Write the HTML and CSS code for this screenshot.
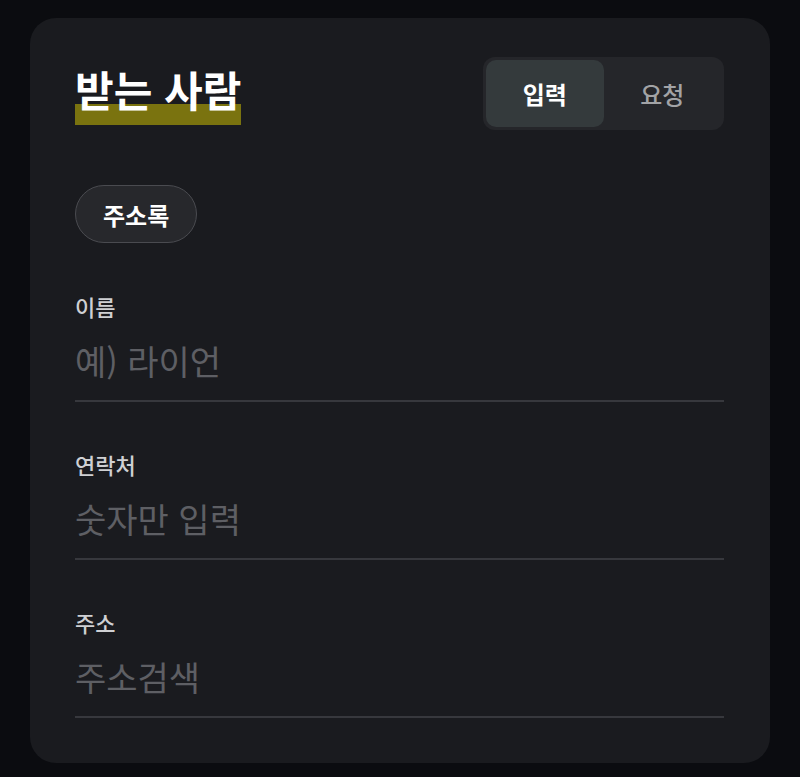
FILE: index.html
```html
<!DOCTYPE html>
<html lang="ko">
<head>
<meta charset="utf-8">
<link rel="stylesheet" href="styles.css">
</head>
<body>
<div class="card">
  <div class="header">
    <h1 class="title"><span class="hl">받는 사람</span></h1>
    <div class="toggle">
      <div class="tab active">입력</div>
      <div class="tab">요청</div>
    </div>
  </div>
  <button class="chip">주소록</button>
  <div class="field first">
    <div class="label">이름</div>
    <div class="input">예) 라이언</div>
  </div>
  <div class="field">
    <div class="label">연락처</div>
    <div class="input">숫자만 입력</div>
  </div>
  <div class="field">
    <div class="label">주소</div>
    <div class="input">주소검색</div>
  </div>
</div>
</body>
</html>
```
FILE: styles.css
```css
* { box-sizing: border-box; }
html, body { margin: 0; padding: 0; }
body {
  background: #0b0c10;
  font-family: "Noto Sans CJK KR", "Noto Sans", sans-serif;
  width: 800px;
  height: 777px;
  overflow: hidden;
}
.card {
  margin: 18px 0 0 30px;
  width: 740px;
  height: 745px;
  background: #1a1b1f;
  border-radius: 26px;
  padding: 39px 46px 0 45px;
  display: flex;
  flex-direction: column;
  align-items: flex-start;
}
.header {
  width: 100%;
  display: flex;
  justify-content: space-between;
  align-items: flex-start;
}
.title {
  margin: 4px 0 0 0;
  font-size: 42px;
  font-weight: 700;
  color: #ffffff;
  line-height: 56px;
}
.hl {
  display: inline-block;
  padding: 0 0 8px 0;
  background: linear-gradient(to bottom, transparent 0, transparent 43px, #7a730f 43px);
}
.toggle {
  display: flex;
  background: #25262a;
  border-radius: 12px;
  padding: 3px;
  width: 241px;
  height: 73px;
}
.tab {
  flex: 1;
  display: flex;
  align-items: center;
  justify-content: center;
  border-radius: 10px;
  font-size: 24px;
  font-weight: 500;
  color: #a2a3a6;
}
.tab.active {
  background: #343a3c;
  color: #ffffff;
  font-weight: 700;
}
.chip {
  margin-top: 55px;
  height: 58px;
  padding: 0 27px;
  border-radius: 29px;
  background: #27282c;
  border: 1px solid #4a4b50;
  color: #ffffff;
  font-family: inherit;
  font-size: 24px;
  font-weight: 700;
}
.field {
  width: 100%;
  margin-top: 48px;
}
.field.first { margin-top: 49px; }
.label {
  font-size: 22px;
  line-height: 28px;
  font-weight: 500;
  color: #cfd0d3;
}
.input {
  margin-top: 19px;
  font-size: 34px;
  line-height: 44px;
  color: #5e5f64;
  padding-bottom: 17px;
  border-bottom: 2px solid #37383d;
}
```
